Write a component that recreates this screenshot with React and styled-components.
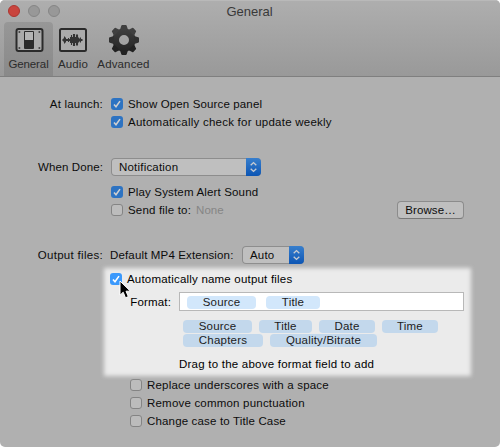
import React from "react";
import styled, { createGlobalStyle } from "styled-components";

const Global = createGlobalStyle`
  * { box-sizing: border-box; }
  body { margin: 0; background: #fff; }
`;

const Window = styled.main`
  width: 500px;
  height: 447px;
  overflow: hidden;
  border-radius: 5px;
  background: #b0b0b0;
  color: #0c0c0c;
  font: 11.5px/18px "Liberation Sans", Arial, sans-serif;
`;

const Header = styled.header`
  height: 77px;
  border-top: 1px solid #b9b9b9;
  border-bottom: 1px solid #7f7f7f;
  background: linear-gradient(#aeaeae, #999);
`;

const TitleBar = styled.div`
  display: grid;
  grid-template-columns: 75px 1fr 76px;
  height: 21px;
`;

const Lights = styled.div`
  display: flex;
  gap: 8px;
  padding: 4px 0 0 8px;
`;

const Light = styled.span`
  width: 12px;
  height: 12px;
  border-radius: 50%;
  border: 1px solid ${(p) => (p.$close ? "#ac3631" : "#858585")};
  background: ${(p) => (p.$close ? "#c9453e" : "#989898")};
`;

const Title = styled.h1`
  margin: 0;
  text-align: center;
  font-size: 13px;
  font-weight: 400;
  line-height: 21px;
  color: #393939;
`;

const Toolbar = styled.nav`
  display: flex;
  padding-left: 4px;
`;

const Tool = styled.div`
  display: flex;
  flex-direction: column;
  align-items: center;
  width: ${(p) => p.$width}px;
  height: 54px;
  padding-top: 2px;
  border-radius: 4px 4px 0 0;
  background: ${(p) => (p.$active ? "linear-gradient(#979797, #898989)" : "none")};
  color: #2b2b2b;
  white-space: nowrap;
`;

const ToolLabel = styled.span`
  letter-spacing: ${(p) => p.$track}px;
  line-height: 14px;
  margin-top: 1px;
`;

const Text = styled.span`
  letter-spacing: ${(p) => p.$track ?? 0.2}px;
  white-space: nowrap;
  color: ${(p) => (p.$muted ? "#858585" : "inherit")};
`;

const Row = styled.div`
  display: flex;
  align-items: center;
  height: 18px;
  margin-top: ${(p) => p.$gap || 0}px;
  padding-left: ${(p) => p.$indent || 0}px;
`;

const Label = styled.div`
  flex: none;
  width: ${(p) => p.$width || 103}px;
  margin-right: ${(p) => p.$space ?? 8}px;
  text-align: right;
`;

const Box = styled.span`
  display: flex;
  flex: none;
  width: 12px;
  height: 12px;
  margin-right: 5px;
  border-radius: 3px;
  border: ${(p) => (p.$checked ? "none" : "1px solid #848484")};
  background: ${(p) => (p.$checked ? (p.$bright ? "#3b99fc" : "#2d73c2") : "#bcbcbc")};
`;

const Popup = styled.div`
  display: flex;
  width: ${(p) => p.$width}px;
  height: 18px;
  margin-left: ${(p) => p.$gap || 0}px;
  padding-left: 8px;
  justify-content: space-between;
  border-radius: 4px;
  background: #bfbfbf;
  box-shadow: inset 0 0 0 1px #8d8d8d;
  line-height: 18px;
`;

const Stepper = styled.span`
  width: 15px;
  height: 18px;
  border-radius: 0 4px 4px 0;
  background: linear-gradient(#387fcd, #0c55b4);
  svg { display: block; }
`;

const FileName = styled.div`
  flex: 1;
  margin-left: 5px;
`;

const Browse = styled.button`
  width: 67px;
  height: 18px;
  margin: 0 36px 0 0;
  padding: 0;
  border: 1px solid #8c8c8c;
  border-bottom-color: #777;
  border-radius: 4px;
  background: #bfbfbf;
  color: #0c0c0c;
  font: inherit;
  line-height: 16px;
`;

const Spotlight = styled.section`
  position: relative;
  isolation: isolate;
  width: 364px;
  height: 104px;
  margin: 6px 0 0 105px;
  padding-left: 5px;
  color: #000;
  &::before {
    content: "";
    position: absolute;
    z-index: -1;
    inset: -2px -2px -2px -1px;
    background: #ebebeb;
    filter: blur(2.2px);
  }
`;

const FormatRow = styled.div`
  display: flex;
  margin-top: 4px;
  height: 20px;
  line-height: 20px;
`;

const Field = styled.div`
  display: flex;
  align-items: center;
  gap: 10px;
  width: 285px;
  height: 19px;
  padding: 2px 0 0 7px;
  border: 1px solid #b8b8b8;
  background: #fff;
`;

const Token = styled.span`
  width: ${(p) => p.$width}px;
  height: 13px;
  border-radius: 4px;
  background: ${(p) => (p.$bright ? "#d2e7fb" : "#c3d8ec")};
  color: #1c1c1c;
  line-height: 13px;
  text-align: center;
`;

const TokenRow = styled.div`
  display: flex;
  gap: 7px;
  height: 13px;
  margin: ${(p) => p.$gap}px 0 0 73px;
`;

const Pointer = styled.svg`
  position: absolute;
  left: 14px;
  top: 10px;
`;

function Check({ checked, bright }) {
  return (
    <Box $checked={checked} $bright={bright}>
      {checked && (
        <svg width="12" height="12" viewBox="0 0 12 12">
          <path d="M3 6.4 5 8.7 9 3.1" fill="none" stroke={bright ? "#fff" : "#d0d0d0"} strokeWidth="1.6" />
        </svg>
      )}
    </Box>
  );
}

function Arrows() {
  return (
    <Stepper>
      <svg width="15" height="18" viewBox="0 0 15 18">
        <path d="M4.7 7.3 7.5 4.6 10.3 7.3M4.7 10.7 7.5 13.4 10.3 10.7" fill="none" stroke="#c6cbd2" strokeWidth="1.4" />
      </svg>
    </Stepper>
  );
}

function SwitchIcon() {
  return (
    <svg width="30" height="32" viewBox="0 0 30 32">
      <rect x="2.5" y="5" width="26" height="22" rx="2" fill="#aaa" stroke="#2b2b2b" strokeWidth="2" />
      <rect x="10" y="7" width="10" height="18" rx="1" fill="#2b2b2b" />
      <rect x="11" y="8" width="8" height="8" fill="#b4b4b4" />
      <g fill="#444">
        <circle cx="5.4" cy="8" r="1" /><circle cx="25.4" cy="8" r="1" />
        <circle cx="5.4" cy="24" r="1" /><circle cx="25.4" cy="24" r="1" />
      </g>
    </svg>
  );
}

const waves = [1, 3, 7, 5, 2, 2, 4, 2, 6, 10, 6, 12, 12, 6, 11, 11, 5, 3, 5, 2, 1];

function WaveIcon() {
  return (
    <svg width="30" height="32" viewBox="0 0 30 32">
      <rect x="2" y="5" width="26" height="22" rx="1.5" fill="#aaa" stroke="#2b2b2b" strokeWidth="2" />
      <path d={waves.map((h, i) => `M${4.5 + i} ${16 - h / 2}v${h}`).join("")} stroke="#333" strokeWidth="1.1" />
    </svg>
  );
}

function GearIcon() {
  return (
    <svg width="30" height="32" viewBox="-15 -16 30 32">
      <defs>
        <linearGradient id="metal" x1="0" x2="0" y1="-15" y2="15" gradientUnits="userSpaceOnUse">
          <stop stopColor="#444" /><stop offset="1" stopColor="#202020" />
        </linearGradient>
      </defs>
      <circle r="8.3" fill="none" stroke="url(#metal)" strokeWidth="6.6" />
      {[0, 45, 90, 135, 180, 225, 270, 315].map((a) => (
        <path key={a} transform={`rotate(${a})`} d="M-4.1-10-2.7-14.2Q-2.5-15-1.8-15H1.8Q2.5-15 2.7-14.2L4.1-10Z" fill={a > 90 && a < 270 ? "#222" : a === 90 || a === 270 ? "#303030" : "#404040"} />
      ))}
    </svg>
  );
}

export default function App() {
  return (
    <>
      <Global />
      <Window>
        <Header>
          <TitleBar>
            <Lights><Light $close /><Light /><Light /></Lights>
            <Title>General</Title>
          </TitleBar>
          <Toolbar>
            <Tool $width={49} $active><SwitchIcon /><ToolLabel $track={-0.1}>General</ToolLabel></Tool>
            <Tool $width={40}><WaveIcon /><ToolLabel $track={0.15}>Audio</ToolLabel></Tool>
            <Tool $width={61}><GearIcon /><ToolLabel $track={0.15}>Advanced</ToolLabel></Tool>
          </Toolbar>
        </Header>

        <Row $gap={18}><Label><Text>At launch:</Text></Label><Check checked /><Text $track={0.14}>Show Open Source panel</Text></Row>
        <Row $indent={111}><Check checked /><Text $track={0.24}>Automatically check for update weekly</Text></Row>
        <Row $gap={27}>
          <Label><Text $track={0.1}>When Done:</Text></Label>
          <Popup $width={150}><Text>Notification</Text><Arrows /></Popup>
        </Row>
        <Row $gap={7} $indent={111}><Check checked /><Text $track={0.16}>Play System Alert Sound</Text></Row>
        <Row $indent={111}>
          <Check /><Text $track={0.18}>Send file to:</Text>
          <FileName><Text $muted $track={0}>None</Text></FileName>
          <Browse><Text $track={0.1}>Browse…</Text></Browse>
        </Row>
        <Row $gap={27}>
          <Label $space={7}><Text $track={0.3}>Output files:</Text></Label>
          <Text $track={0.15}>Default MP4 Extension:</Text>
          <Popup $width={62} $gap={8.5}><Text>Auto</Text><Arrows /></Popup>
        </Row>

        <Spotlight>
          <Row><Check checked bright /><Text>Automatically name output files</Text></Row>
          <FormatRow>
            <Label $width={61} $space={8}><Text $track={0.15}>Format:</Text></Label>
            <Field>
              <Token $width={69} $bright><Text>Source</Text></Token>
              <Token $width={54} $bright><Text>Title</Text></Token>
            </Field>
          </FormatRow>
          <TokenRow $gap={8}>
            <Token $width={69}><Text>Source</Text></Token>
            <Token $width={53}><Text>Title</Text></Token>
            <Token $width={56}><Text>Date</Text></Token>
            <Token $width={56}><Text>Time</Text></Token>
          </TokenRow>
          <TokenRow $gap={1}>
            <Token $width={80}><Text>Chapters</Text></Token>
            <Token $width={107}><Text>Quality/Bitrate</Text></Token>
          </TokenRow>
          <Row $gap={8} $indent={69}><Text $track={0.23}>Drag to the above format field to add</Text></Row>
          <Pointer width="13" height="20" viewBox="0 0 13 20">
            <path d="M1 1v14.2l3.2-3 2.3 5.6 2.8-1.2-2.3-5.4h4.4Z" fill="#000" stroke="#fff" />
          </Pointer>
        </Spotlight>

        <Row $gap={2} $indent={130}><Check /><Text $track={0.19}>Replace underscores with a space</Text></Row>
        <Row $indent={130}><Check /><Text $track={0.2}>Remove common punctuation</Text></Row>
        <Row $indent={130}><Check /><Text $track={0.16}>Change case to Title Case</Text></Row>
      </Window>
    </>
  );
}
